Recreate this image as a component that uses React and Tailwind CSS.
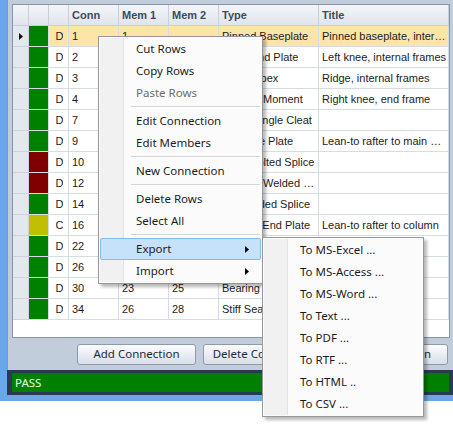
import React from 'react';

const rows = [
  { id: '1', code: 'D', color: '#008000', m1: '1', m2: '', type: 'Pinned Baseplate', title: 'Pinned baseplate, internal frames', selected: true },
  { id: '2', code: 'D', color: '#008000', m1: '2', m2: '3', type: 'Knee End Plate', title: 'Left knee, internal frames' },
  { id: '3', code: 'D', color: '#008000', m1: '4', m2: '5', type: 'Ridge Apex', title: 'Ridge, internal frames' },
  { id: '4', code: 'D', color: '#008000', m1: '6', m2: '7', type: 'Haunch Moment', title: 'Right knee, end frame' },
  { id: '7', code: 'D', color: '#008000', m1: '8', m2: '9', type: 'Single Angle Cleat', title: '' },
  { id: '9', code: 'D', color: '#008000', m1: '10', m2: '11', type: 'Tie Base Plate', title: 'Lean-to rafter to main Wall' },
  { id: '10', code: 'D', color: '#800000', m1: '12', m2: '13', type: 'Apex Bolted Splice', title: '' },
  { id: '12', code: 'D', color: '#800000', m1: '14', m2: '15', type: 'Column Welded Splice', title: '' },
  { id: '14', code: 'D', color: '#008000', m1: '16', m2: '17', type: 'Tie Welded Splice', title: '' },
  { id: '16', code: 'C', color: '#c0c000', m1: '18', m2: '19', type: 'Lean-to End Plate', title: 'Lean-to rafter to column' },
  { id: '22', code: 'D', color: '#008000', m1: '20', m2: '21', type: 'Fin Plate', title: '' },
  { id: '26', code: 'D', color: '#008000', m1: '22', m2: '24', type: 'Web Cleat', title: '' },
  { id: '30', code: 'D', color: '#008000', m1: '23', m2: '25', type: 'Bearing Stiffener', title: '' },
  { id: '34', code: 'D', color: '#008000', m1: '26', m2: '28', type: 'Stiff Seat', title: '' },
];

const cols = 'grid grid-cols-[16px_20px_20px_50px_50px_50px_100px_130px]';

const Arrow = () => (
  <svg width="4" height="7" viewBox="0 0 4 7" className="ml-auto mr-[11px]">
    <path d="M0 0L4 3.5L0 7Z" fill="#000" />
  </svg>
);

const Item = ({ label, disabled, active, sub }) => (
  <div
    className={`h-[22px] flex items-center pl-[35px] rounded-[2px] border ${
      active ? 'bg-[#c6e1fa] border-[#84bbef]' : 'border-transparent'
    } ${disabled ? 'text-[#6d6d6d]' : 'text-[#1b1b1b]'}`}
  >
    <span>{label}</span>
    {sub && <Arrow />}
  </div>
);

const Sep = () => (
  <div className="h-[6px] pt-[2px] pl-[31px] pr-[1px]">
    <div className="h-px bg-[#d5d5d5] border-b border-white box-content" />
  </div>
);

const Menu = ({ className, children }) => (
  <div className={`absolute bg-[#fbfbfb] border border-[#979797] p-px shadow-[3px_3px_3px_rgba(0,0,0,0.28)] text-[11.5px] ${className}`}>
    <div className="absolute left-px top-px bottom-px w-[24px] bg-[#f1f1f1] border-r border-[#e2e3e3]" />
    <div className="relative">{children}</div>
  </div>
);

const Cell = ({ children, className = '' }) => (
  <div className={`h-[21px] border-r border-b border-[#d6dce6] flex items-center pl-[3px] pr-px overflow-hidden whitespace-nowrap ${className}`}>
    <span className="truncate">{children}</span>
  </div>
);

export default function App() {
  return (
    <div className="w-[453px] h-[424px] bg-white relative overflow-hidden font-['Noto_Sans',sans-serif]">
      <div className="h-[401px] bg-[#6aa7ea] pl-[7px] pb-[6px] flex">
        <div className="flex-1 bg-[#c2cddc] border-l border-[#7e98bd] flex flex-col">
          {/* grid */}
          <div className="mt-[4px] ml-[4px] w-[438px] h-[334px] border border-[#8896aa] bg-white text-[11px] text-[#1c1c1c] font-['Liberation_Sans',Arial,sans-serif]">
            <div className={`${cols} bg-gradient-to-b from-[#f3f5f8] to-[#dfe4eb] font-bold text-[#3d4b5e]`}>
              {['', '', '', 'Conn', 'Mem 1', 'Mem 2', 'Type', 'Title'].map((h, i) => (
                <div key={i} className="h-[21px] border-r border-b border-[#c6ced9] flex items-center px-[3px] whitespace-nowrap">
                  {h}
                </div>
              ))}
            </div>
            {rows.map((r) => (
              <div key={r.id} className={cols}>
                <div className="h-[21px] bg-[#e3e7ee] border-r border-b border-[#ccd3de] flex items-center justify-center">
                  {r.selected && (
                    <svg width="4" height="7" viewBox="0 0 4 7">
                      <path d="M0 0L4 3.5L0 7Z" fill="#111" />
                    </svg>
                  )}
                </div>
                <div className="h-[21px] border-r border-b border-[#d6dce6]" style={{ backgroundColor: r.color }} />
                <Cell className={`justify-center ${r.selected ? 'bg-[#fde5a8]' : ''}`}>{r.code}</Cell>
                <Cell className={r.selected ? 'bg-[#fde5a8]' : ''}>{r.id}</Cell>
                <Cell className={r.selected ? 'bg-[#fde5a8]' : ''}>{r.m1}</Cell>
                <Cell className={r.selected ? 'bg-[#fde5a8]' : ''}>{r.m2}</Cell>
                <Cell className={r.selected ? 'bg-[#fde5a8]' : ''}>{r.type}</Cell>
                <Cell className={r.selected ? 'bg-[#fde5a8]' : ''}>{r.title}</Cell>
              </div>
            ))}
          </div>

          {/* buttons */}
          <div className="h-[32px] flex items-center justify-end gap-[7px] pr-[5px] text-[11.5px] text-[#1e2a3a]">
            {['Add Connection', 'Delete Connection', 'Edit Connection'].map((b) => (
              <button
                key={b}
                className="w-[119px] h-[21px] rounded-[3px] border border-[#8e9aac] bg-gradient-to-b from-[#fbfcfd] to-[#d9dfe8] flex items-center justify-center"
              >
                {b}
              </button>
            ))}
          </div>

          {/* status */}
          <div className="h-[25px] -ml-px bg-[#2b3955] pl-[5px] pr-[4px] pt-[3px] pb-[3px]">
            <div className="h-full bg-[#008000] text-[#e6ffe6] text-[11.5px] flex items-center pl-[3px]">PASS</div>
          </div>
        </div>
      </div>

      <Menu className="left-[98px] top-[36px] w-[165px]">
        <Item label="Cut Rows" />
        <Item label="Copy Rows" />
        <Item label="Paste Rows" disabled />
        <Sep />
        <Item label="Edit Connection" />
        <Item label="Edit Members" />
        <Sep />
        <Item label="New Connection" />
        <Sep />
        <Item label="Delete Rows" />
        <Item label="Select All" />
        <Sep />
        <Item label="Export" active sub />
        <Item label="Import" sub />
      </Menu>

      <Menu className="left-[262px] top-[237px] w-[162px]">
        {['To MS-Excel ...', 'To MS-Access ...', 'To MS-Word ...', 'To Text ...', 'To PDF ...', 'To RTF ...', 'To HTML ..', 'To CSV ...'].map((s) => (
          <Item key={s} label={s} />
        ))}
      </Menu>
    </div>
  );
}
